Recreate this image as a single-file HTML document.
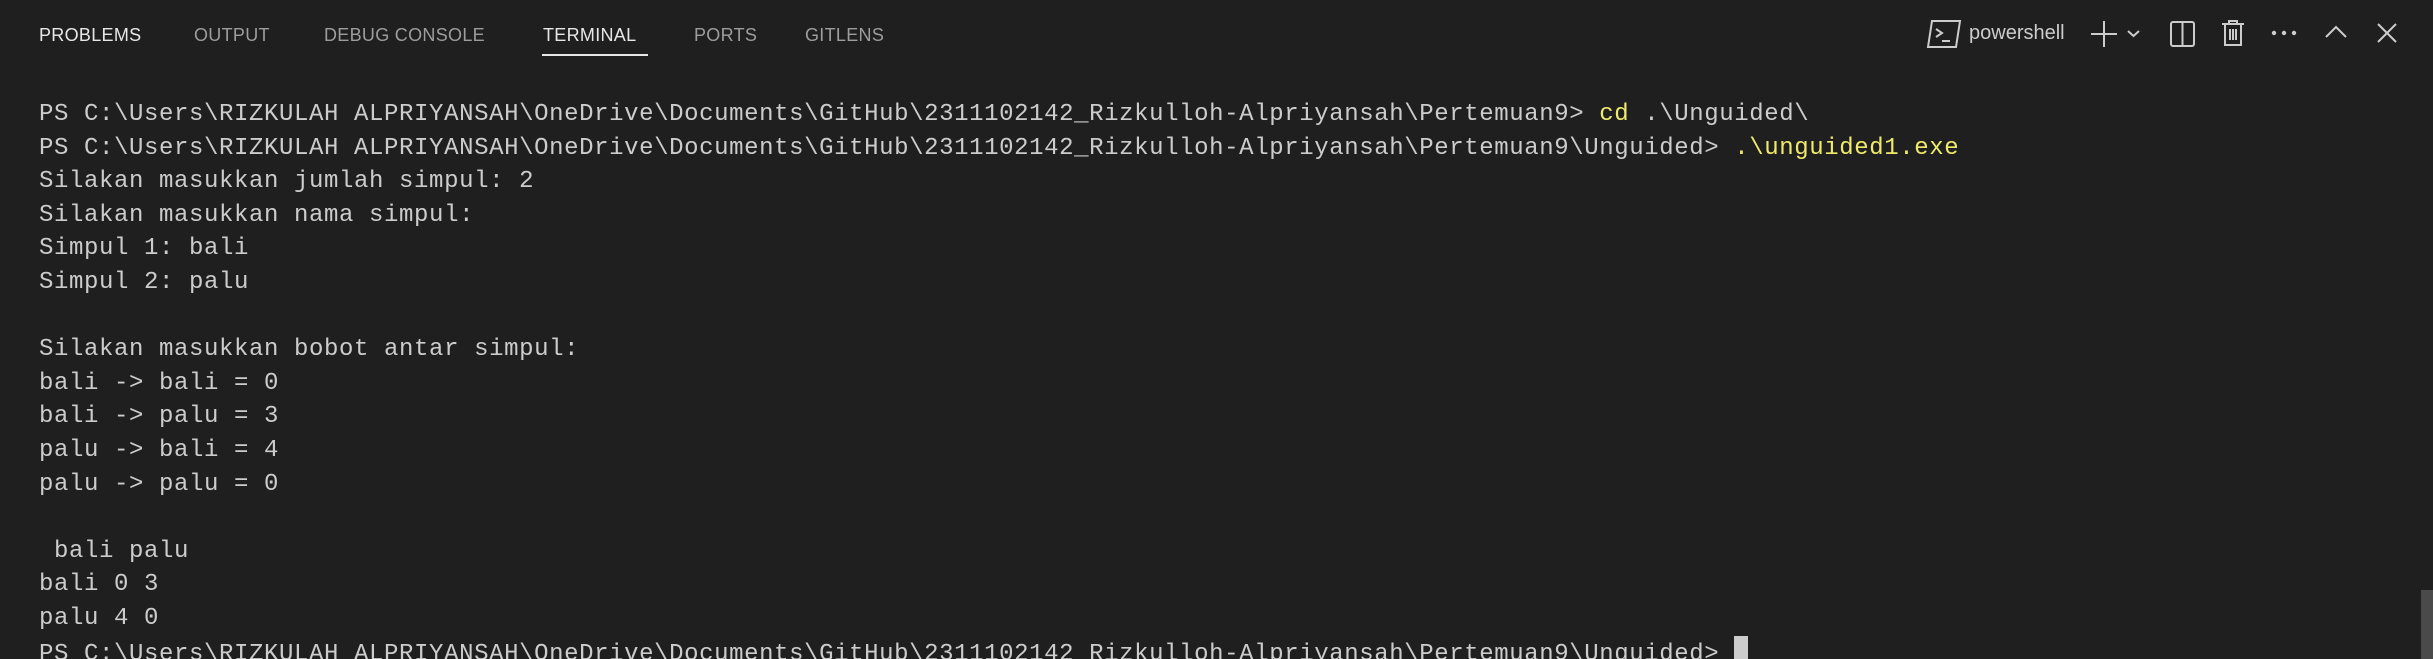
<!DOCTYPE html>
<html><head><meta charset="utf-8"><style>
html,body{margin:0;padding:0;background:#1f1f1f;width:2433px;height:659px;overflow:hidden;position:relative}
.tab{position:absolute;top:22px;font-family:"Liberation Sans",sans-serif;font-size:18px;color:#9d9d9d;line-height:26px;letter-spacing:0.3px}
.act{color:#e7e7e7}
.ul{position:absolute;left:542px;top:54px;width:106px;height:2px;background:#e7e7e7}
.term{position:absolute;left:39px;top:98px;font-family:"Liberation Mono",monospace;font-size:24px;letter-spacing:0.6px;line-height:33.6px;color:#cccccc;white-space:pre}
.y{color:#eeea6c}
.cur{display:inline-block;width:14px;height:30px;background:#cccccc;vertical-align:-6px}
svg{position:absolute}
</style></head><body>
<div class="tab act" style="left:39px">PROBLEMS</div>
<div class="tab" style="left:194px">OUTPUT</div>
<div class="tab" style="left:324px">DEBUG CONSOLE</div>
<div class="tab act" style="left:543px">TERMINAL</div>
<div class="tab" style="left:694px">PORTS</div>
<div class="tab" style="left:805px">GITLENS</div>
<div class="ul"></div>

<svg style="left:1926px;top:18px" width="36" height="32" viewBox="0 0 36 32" fill="none" stroke="#cccccc" stroke-width="2"><path d="M6 3H34L30 29H2Z"/><path d="M10 11L16 15L10 19"/><path d="M16 23H24"/></svg>
<div class="tab" style="left:1969px;top:20px;color:#cccccc;font-size:20px;letter-spacing:0">powershell</div>
<svg style="left:2090px;top:20px" width="60" height="28" fill="none" stroke="#cccccc" stroke-width="2"><path d="M14 1V27M1 14H27"/><path d="M38 11L43.5 16L49 11"/></svg>
<svg style="left:2168px;top:20px" width="28" height="28" fill="none" stroke="#cccccc" stroke-width="2"><rect x="3" y="2" width="23" height="24" rx="2"/><path d="M14.5 2V26"/></svg>
<svg style="left:2220px;top:18px" width="26" height="30" fill="none" stroke="#cccccc" stroke-width="2"><path d="M2 6H24M9 6V3H17V6M5 6V27H21V6M10 11V22M13 11V22M16 11V22"/></svg>
<svg style="left:2270px;top:26px" width="30" height="14" fill="#cccccc"><circle cx="4" cy="7" r="2.2"/><circle cx="14" cy="7" r="2.2"/><circle cx="24" cy="7" r="2.2"/></svg>
<svg style="left:2324px;top:22px" width="24" height="20" fill="none" stroke="#cccccc" stroke-width="2"><path d="M2 15L12 5L22 15"/></svg>
<svg style="left:2376px;top:22px" width="22" height="22" fill="none" stroke="#cccccc" stroke-width="2"><path d="M2 2L20 20M20 2L2 20"/></svg>

<div class="term">PS C:\Users\RIZKULAH ALPRIYANSAH\OneDrive\Documents\GitHub\2311102142_Rizkulloh-Alpriyansah\Pertemuan9&gt; <span class="y">cd</span> .\Unguided\
PS C:\Users\RIZKULAH ALPRIYANSAH\OneDrive\Documents\GitHub\2311102142_Rizkulloh-Alpriyansah\Pertemuan9\Unguided&gt; <span class="y">.\unguided1.exe</span>
Silakan masukkan jumlah simpul: 2
Silakan masukkan nama simpul:
Simpul 1: bali
Simpul 2: palu

Silakan masukkan bobot antar simpul:
bali -&gt; bali = 0
bali -&gt; palu = 3
palu -&gt; bali = 4
palu -&gt; palu = 0

 bali palu
bali 0 3
palu 4 0
PS C:\Users\RIZKULAH ALPRIYANSAH\OneDrive\Documents\GitHub\2311102142_Rizkulloh-Alpriyansah\Pertemuan9\Unguided&gt; <span class="cur"></span></div>
<div style="position:absolute;left:2421px;top:590px;width:12px;height:69px;background:#4a4a4a"></div>
</body></html>
